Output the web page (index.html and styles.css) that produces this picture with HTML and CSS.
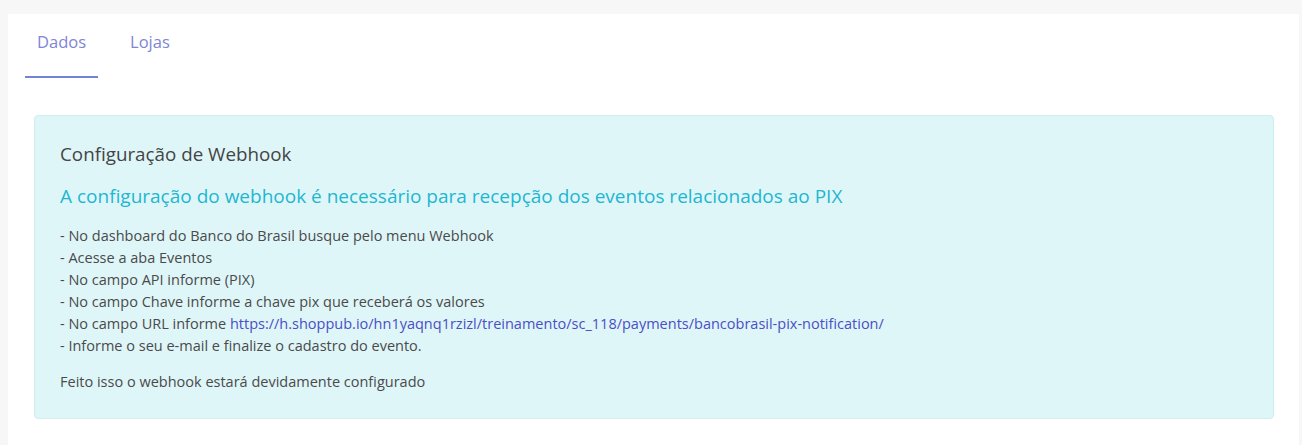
FILE: index.html
```html
<!DOCTYPE html>
<html lang="pt-BR">
<head>
    <meta charset="UTF-8">
    <meta name="viewport" content="width=device-width, initial-scale=1.0">
    <title>Configuração</title>
    <link rel="stylesheet" href="styles.css">
</head>
<body>

<div class="card">
    <ul class="tabs">
        <li class="tab active">Dados</li>
        <li class="tab">Lojas</li>
    </ul>

    <div class="tab-content">
        <div class="alert-info">
            <h5 class="alert-title">Configuração de Webhook</h5>
            <h4 class="alert-subtitle">A configuração do webhook é necessário para recepção dos eventos relacionados ao PIX</h4>
            <p class="steps">
                - No dashboard do Banco do Brasil busque pelo menu Webhook<br>
                - Acesse a aba Eventos<br>
                - No campo API informe (PIX)<br>
                - No campo Chave informe a chave pix que receberá os valores<br>
                - No campo URL informe <a href="#">https://h.shoppub.io/hn1yaqnq1rzizl/treinamento/sc_118/payments/bancobrasil-pix-notification/</a><br>
                - Informe o seu e-mail e finalize o cadastro do evento.
            </p>
            <p class="done">Feito isso o webhook estará devidamente configurado</p>
        </div>
    </div>
</div>

</body>
</html>
```

FILE: styles.css
```css
body {
    font-family: "Open Sans", "Noto Sans", sans-serif;
    margin: 0;
    padding: 14px 3px 0 8px;
    background-color: #f7f7f7;
    color: #4a4a4a;
}

.card {
    background-color: white;
    height: 431px;
}

.tabs {
    list-style: none;
    margin: 0;
    padding: 0 0 0 17px;
    display: flex;
    gap: 20px;
}

.tab {
    padding: 17px 12px 23px;
    font-size: 16.5px;
    line-height: 22px;
    color: #7d86d6;
    border-bottom: 2px solid transparent;
    cursor: pointer;
}

.tab.active {
    border-bottom-color: #7484d4;
}

.tab-content {
    padding: 37px 25px 0 26px;
}

.alert-info {
    background-color: #dff6f9;
    border: 1px solid #cdeef3;
    border-radius: 4px;
    padding: 26px 25px 25px;
}

.alert-title {
    margin: 0 0 16px;
    font-size: 18.8px;
    font-weight: normal;
    line-height: 25px;
    color: #444;
}

.alert-subtitle {
    margin: 0 0 16px;
    font-size: 19px;
    font-weight: normal;
    line-height: 26px;
    color: #1eb6d0;
}

.steps, .done {
    margin: 0;
    font-size: 14.5px;
    line-height: 22px;
    color: #4a4a4a;
}

.steps {
    margin-bottom: 14px;
}

.steps a {
    color: #4a4fc4;
    text-decoration: none;
}
```
